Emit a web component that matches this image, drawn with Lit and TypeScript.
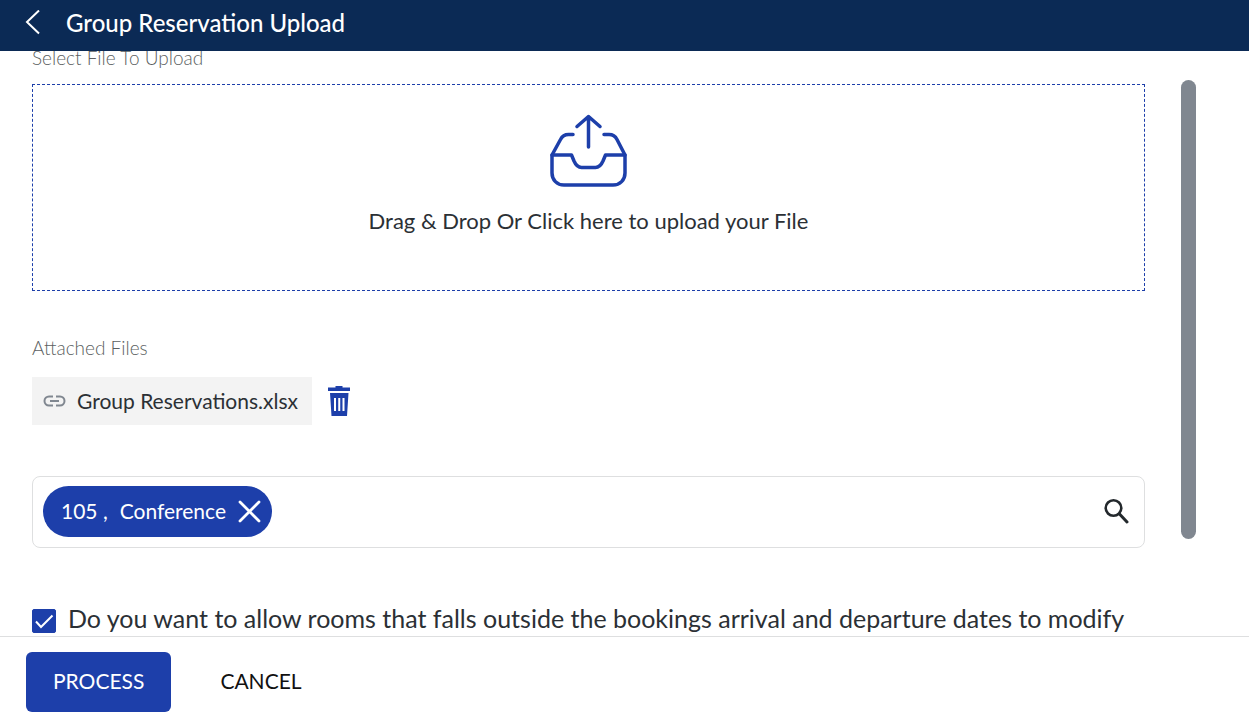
import { LitElement, html, css } from "lit";
import { customElement, state } from "lit/decorators.js";

@customElement("app-root")
export class AppRoot extends LitElement {
  @state() private allowOutside = true;

  static styles = css`
    :host {
      display: flex;
      flex-direction: column;
      height: 100vh;
      overflow: hidden;
      background: #fff;
      color: #2b3035;
      font-family: Lato, "Liberation Sans", sans-serif;
      font-size: 21px;
      line-height: 24px;
    }
    * { box-sizing: border-box; }
    svg { display: block; fill: none; }
    button {
      font: inherit;
      color: inherit;
      background: none;
      border: 0;
      margin: 0;
      padding: 0;
      cursor: pointer;
    }
    .bar {
      display: flex;
      align-items: center;
      gap: 24px;
      flex: none;
      height: 51px;
      padding: 0 24px 6px;
      background: #0b2a55;
      color: #fff;
    }
    .title { margin: 0; font-size: 24px; line-height: 32px; font-weight: 500; }
    .main {
      flex: 1;
      min-height: 0;
      display: flex;
      gap: 36px;
      padding: 0 53px 0 32px;
      overflow: hidden;
    }
    .form { flex: 1; min-width: 0; margin-top: -5px; }
    .label { color: #5c5f62; font-size: 19px; line-height: 24px; font-weight: 300; margin: 0; }
    .drop {
      display: flex;
      flex-direction: column;
      align-items: center;
      gap: 21px;
      width: 100%;
      height: 207px;
      margin: 14px 0 45px;
      padding-top: 29px;
      border: 1px dashed #1d3faa;
      font-size: 22px;
    }
    .files { display: flex; align-items: center; gap: 15px; margin: 17px 0 51px; }
    .file {
      display: flex;
      align-items: center;
      gap: 11px;
      height: 48px;
      padding: 0 14px 1px 11px;
      background: #f3f3f3;
      color: inherit;
      text-decoration: none;
    }
    .search {
      display: flex;
      align-items: center;
      height: 72px;
      padding: 0 15px 2px 10px;
      border: 1px solid #dedfe0;
      border-radius: 8px;
    }
    .chip {
      display: flex;
      align-items: center;
      gap: 12px;
      height: 51px;
      padding: 0 11px 0 18px;
      border-radius: 26px;
      background: #1d3faa;
      color: #fff;
    }
    .query { flex: 1; min-width: 0; height: 48px; border: 0; outline: 0; font: inherit; background: none; }
    .option { display: flex; align-items: flex-start; gap: 12px; margin-top: 54px; font-size: 25px; line-height: 32px; }
    .box { display: grid; flex: none; margin-top: 7px; }
    .box > * { grid-area: 1 / 1; }
    .tick { appearance: none; width: 24px; height: 24px; margin: 0; border: 1px solid #1d3faa; border-radius: 2px; }
    .tick:checked { background: #1d3faa; }
    .mark { pointer-events: none; }
    .thumb { flex: none; width: 15px; height: 459px; margin-top: 29px; border-radius: 8px; background: #808790; }
    .actions {
      display: flex;
      flex: none;
      gap: 22px;
      padding: 15px 26px 13px;
      border-top: 1px solid #dedfe0;
    }
    .action { height: 60px; padding: 0 27px 2px; border-radius: 6px; color: #111; }
    .primary { background: #1d3faa; color: #fff; }
  `;

  render() {
    return html`
      <header class="bar">
        <button aria-label="Back">
          <svg width="18" height="26" viewBox="0 0 18 26" stroke="#fff" stroke-width="2"><path d="M15 .5 3 12 15 23.500" /></svg>
        </button>
        <h1 class="title">Group Reservation Upload</h1>
      </header>
      <main class="main">
        <div class="form">
          <p class="label">Select File To Upload</p>
          <button class="drop">
            <svg width="80" height="74" viewBox="0 0 80 74" stroke="#1d3faa" stroke-width="3.500" stroke-linecap="round" stroke-linejoin="round">
              <path d="M39.500 33V2.500M28 12.500 39.500 2.500l11.500 10" />
              <path d="M24 20.500h-4.500c-4 0-6.500 2-8 5L3 41v18c0 7 5 12 12 12h49c7 0 12-5 12-12V41l-8-15.500c-1.500-3-4-5-8-5h-5" />
              <path d="M3 41h19.500l2.500 6c2 4.500 4 6.500 7.500 6.500h14c3.500 0 5.500-2 7.500-6.500L56.500 41H76" />
            </svg>
            <span>Drag &amp; Drop Or Click here to upload your File</span>
          </button>
          <p class="label">Attached Files</p>
          <div class="files">
            <a class="file" href="#">
              <svg width="23" height="12" viewBox="0 0 23 12" stroke="#808790" stroke-width="2"><path d="M10 1.500H6a4.500 4.500 0 0 0 0 9h4M13 1.500h4a4.500 4.500 0 0 1 0 9h-4M7 6h9" /></svg>
              <span>Group Reservations.xlsx</span>
            </a>
            <button aria-label="Delete file">
              <svg width="24" height="30" viewBox="0 0 24 30">
                <path fill="#1d3faa" d="M8.500 1.500V0h7v1.500H23V5H1V1.500zM3 7h18.500l-1.500 23H4.500z" />
                <path stroke="#fff" stroke-width="2" d="M8 12v13M12.250 12v13M16.500 12v13" />
              </svg>
            </button>
          </div>
          <div class="search">
            <div class="chip">
              <span>105 ,</span>
              <span>Conference</span>
              <button aria-label="Remove">
                <svg width="23" height="23" viewBox="0 0 23 23" stroke="#fff" stroke-width="2.800" stroke-linecap="round"><path d="m2 2 19 19M21 2 2 21" /></svg>
              </button>
            </div>
            <input class="query" type="text" aria-label="Search" />
            <button aria-label="Search">
              <svg width="26" height="26" viewBox="0 0 26 26" stroke="#23282c" stroke-linecap="round"><circle cx="10.500" cy="10" r="7.800" stroke-width="2.600" /><path stroke-width="3" d="m16.500 16 7.500 8" /></svg>
            </button>
          </div>
          <label class="option">
            <span class="box">
              <input class="tick" type="checkbox" .checked=${this.allowOutside}
                @change=${(e: Event) => (this.allowOutside = (e.target as HTMLInputElement).checked)} />
              <svg class="mark" width="24" height="24" viewBox="0 0 24 24" stroke="#fff" stroke-width="2"><path d="m4 12.500 5 5.500L20.500 6.500" /></svg>
            </span>
            <span>Do you want to allow rooms that falls outside the bookings arrival and departure dates to modify</span>
          </label>
        </div>
        <div class="thumb"></div>
      </main>
      <footer class="actions">
        <button class="action primary">PROCESS</button>
        <button class="action">CANCEL</button>
      </footer>
    `;
  }
}
